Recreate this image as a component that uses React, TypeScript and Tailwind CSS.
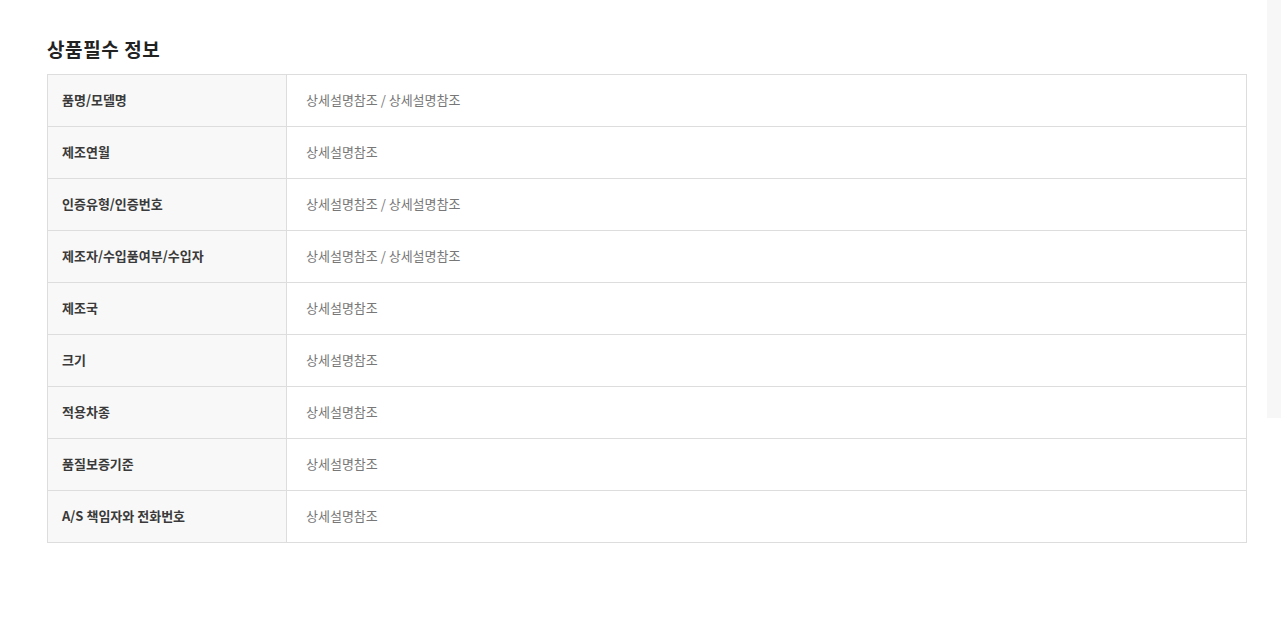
import React from 'react';

const rows = [
  { label: '품명/모델명', value: '상세설명참조 / 상세설명참조' },
  { label: '제조연월', value: '상세설명참조' },
  { label: '인증유형/인증번호', value: '상세설명참조 / 상세설명참조' },
  { label: '제조자/수입품여부/수입자', value: '상세설명참조 / 상세설명참조' },
  { label: '제조국', value: '상세설명참조' },
  { label: '크기', value: '상세설명참조' },
  { label: '적용차종', value: '상세설명참조' },
  { label: '품질보증기준', value: '상세설명참조' },
  { label: 'A/S 책임자와 전화번호', value: '상세설명참조' },
];

const App: React.FC = () => {
  return (
    <div
      className="flex min-h-screen bg-white"
      style={{ fontFamily: '"Noto Sans CJK KR", "Noto Sans", sans-serif' }}
    >
      <div className="flex-1 pl-[47px] pt-[36px]">
        {/* Title */}
        <h2 className="mb-[12px] text-[19px] font-bold leading-[26px] tracking-[0.6px] text-[#222]">
          상품필수 정보
        </h2>

        {/* Info Table */}
        <div className="w-[1200px] border border-[#dddddd]">
          {rows.map((row, i) => (
            <div
              key={row.label}
              className={i > 0 ? 'flex h-[52px] border-t border-[#dddddd]' : 'flex h-[51px]'}
            >
              <div className="flex w-[239px] items-center border-r border-[#dddddd] bg-[#f8f8f8] pb-[2px] pl-[14px] text-[13px] font-bold text-[#3a3a3a]">
                {row.label}
              </div>
              <div className="flex flex-1 items-center pb-[2px] pl-[19px] text-[13px] text-[#777]">
                {row.value}
              </div>
            </div>
          ))}
        </div>
      </div>

      {/* right side strip */}
      <div className="w-[14px]">
        <div className="h-[418px] bg-[#f7f7f7]" />
      </div>
    </div>
  );
};

export default App;
